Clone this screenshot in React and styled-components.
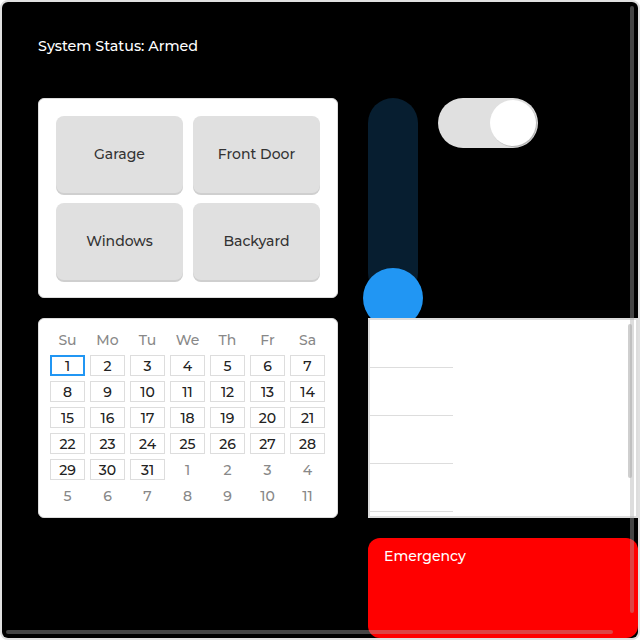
import React from "react";
import styled, { createGlobalStyle } from "styled-components";

const Global = createGlobalStyle`
  html, body { margin: 0; padding: 0; background: #fff; }
  body { font-family: "Montserrat", "Noto Sans", sans-serif; font-weight: 500; }
  * { box-sizing: border-box; }
  ::-webkit-scrollbar { display: none; }
`;

const Viewport = styled.div`
  position: relative;
  width: 640px;
  height: 640px;
`;

const Frame = styled.div`
  width: 640px;
  height: 640px;
  border: 2px solid #e0e0e0;
  border-radius: 8px;
  background: #000;
  overflow: auto;
  scrollbar-width: none;
  padding: 36px;
`;

const Thumb = styled.div`
  position: absolute;
  z-index: 5;
  border-radius: 2px;
  background: rgba(170, 170, 170, 0.4);
  pointer-events: none;
  ${(p) =>
    p.$vertical
      ? `width: 4px; height: ${p.$size}px; top: ${p.$start}px; right: ${p.$edge}px;`
      : `height: 4px; width: ${p.$size}px; left: ${p.$start}px; bottom: ${p.$edge}px;`}
`;

const Title = styled.div`
  color: #fff;
  font-size: 14.3px;
  line-height: 16px;
  margin-bottom: 44px;
  white-space: nowrap;
`;

const Grid = styled.div`
  display: grid;
  grid-template-columns: 300px 270px;
  grid-template-rows: 200px 200px 100px;
  column-gap: 30px;
  row-gap: 20px;
  width: 600px;
`;

const Panel = styled.div`
  background: #fff;
  border: 1px solid #ddd;
  border-radius: 6px;
`;

const ZonePanel = styled(Panel)`
  padding: 17px;
  display: grid;
  grid-template-columns: 1fr 1fr;
  grid-template-rows: 1fr 1fr;
  gap: 10px;
`;

const ZoneButton = styled.button`
  font-family: inherit;
  font-weight: 500;
  background: #e0e0e0;
  border: none;
  border-radius: 8px;
  box-shadow: 0 2px 0 #cfcfcf;
  color: #333;
  font-size: 14px;
  padding: 0 0 2px;
  cursor: pointer;
`;

const Controls = styled.div`
  display: flex;
  align-items: flex-start;
  gap: 20px;
`;

const SliderTrack = styled.div`
  position: relative;
  width: 50px;
  height: 200px;
  border-radius: 25px;
  background: #071e30;
  flex-shrink: 0;
`;

const SliderThumb = styled.div`
  position: absolute;
  left: -5px;
  bottom: -30px;
  width: 60px;
  height: 60px;
  border-radius: 50%;
  background: #2196f3;
`;

const Toggle = styled.div`
  width: 100px;
  height: 50px;
  border-radius: 25px;
  background: #e0e0e0;
  display: flex;
  align-items: center;
  justify-content: flex-end;
  padding: 2px;
`;

const Knob = styled.div`
  width: 46px;
  height: 46px;
  border-radius: 50%;
  background: #fff;
  box-shadow: 1px 1px 1px rgba(0, 0, 0, 0.2);
`;

const Calendar = styled(Panel)`
  padding: 10px 11px;
  display: grid;
  grid-template-columns: repeat(7, 35px);
  grid-auto-rows: 21px;
  column-gap: 5px;
  row-gap: 5px;
`;

const DayName = styled.div`
  color: #888;
  font-size: 14px;
  display: flex;
  align-items: center;
  justify-content: center;
`;

const Day = styled.div`
  font-size: 14px;
  display: flex;
  align-items: center;
  justify-content: center;
  color: ${(p) => (p.$muted ? "#888" : "#222")};
  border: ${(p) =>
    p.$muted ? "1px solid transparent" : p.$selected ? "2px solid #2196f3" : "1px solid #ddd"};
`;

const ListCell = styled.div`
  position: relative;
  z-index: 1;
`;

const ListBox = styled.div`
  height: 100%;
  background: #fff;
  border: 2px solid #ddd;
  overflow-y: auto;
  scrollbar-width: none;
  padding-bottom: 10px;
`;

const ListThumb = styled.div`
  position: absolute;
  top: 6px;
  right: 6px;
  width: 4px;
  height: 154px;
  border-radius: 2px;
  background: #cfcfcf;
`;

const ListItem = styled.div`
  width: 83px;
  height: 48px;
  border-bottom: 1px solid #ddd;
`;

const Emergency = styled.button`
  grid-column: 2;
  font-family: inherit;
  font-weight: 500;
  background: #ff0000;
  color: #fff;
  border: none;
  border-radius: 12px;
  font-size: 14px;
  text-align: left;
  padding: 9px 16px;
  display: flex;
  align-items: flex-start;
  cursor: pointer;
`;

const days = [];
for (let i = 1; i <= 31; i++) days.push({ n: i, muted: false });
for (let i = 1; i <= 11; i++) days.push({ n: i, muted: true });

export default function App() {
  return (
    <>
      <Global />
      <Viewport>
        <Frame>
          <Title>System Status: Armed</Title>
          <Grid>
            <ZonePanel>
              <ZoneButton>Garage</ZoneButton>
              <ZoneButton>Front Door</ZoneButton>
              <ZoneButton>Windows</ZoneButton>
              <ZoneButton>Backyard</ZoneButton>
            </ZonePanel>
            <Controls>
              <SliderTrack>
                <SliderThumb />
              </SliderTrack>
              <Toggle>
                <Knob />
              </Toggle>
            </Controls>
            <Calendar>
              {["Su", "Mo", "Tu", "We", "Th", "Fr", "Sa"].map((d) => (
                <DayName key={d}>{d}</DayName>
              ))}
              {days.map((d, i) => (
                <Day key={i} $muted={d.muted} $selected={!d.muted && d.n === 1}>
                  {d.n}
                </Day>
              ))}
            </Calendar>
            <ListCell>
              <ListBox>
                {[0, 1, 2, 3, 4].map((i) => (
                  <ListItem key={i} />
                ))}
              </ListBox>
              <ListThumb />
            </ListCell>
            <Emergency>Emergency</Emergency>
          </Grid>
        </Frame>
        <Thumb $vertical $size={607} $start={6} $edge={6} />
        <Thumb $size={607} $start={6} $edge={6} />
      </Viewport>
    </>
  );
}
